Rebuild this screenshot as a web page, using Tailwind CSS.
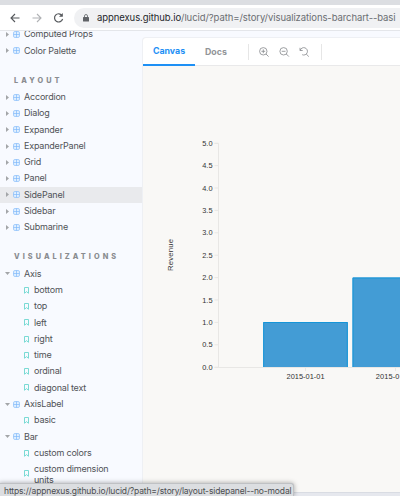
<!DOCTYPE html>
<html lang="en">
<head>
<meta charset="utf-8">
<title>Lucid stories</title>
<script src="https://cdn.jsdelivr.net/npm/@tailwindcss/browser@4"></script>
</head>
<body class="relative flex h-[496px] w-[400px] flex-col overflow-hidden bg-[#f8faff] font-['Inter',sans-serif] text-[#505357]">
<svg class="hidden">
  <symbol id="grid" viewBox="0 0 12 12"><rect x="1" y="1" width="10" height="10" rx="2" fill="#e3f1ff" stroke="#7fb9fb" stroke-width="1.2"/><path d="M6 1v10M1 6h10" stroke="#7fb9fb" stroke-width="1.2"/></symbol>
  <symbol id="mark" viewBox="0 0 10 14"><path d="M1 1h8v11.5L5 9.3 1 12.5z" fill="none" stroke="#6bd6cf" stroke-width="1.8"/></symbol>
</svg>
<div class="h-[5px] shrink-0 bg-[#dcdee2]"></div>
<header class="flex h-[26px] shrink-0 items-center border-b border-[#e4e6ea] bg-white pl-[10px]">
  <svg class="h-3 w-[10px] shrink-0" viewBox="0 0 10 12" fill="none" stroke="#55585c" stroke-width="1.1"><path d="M9.5 6H1M5 2 1 6l4 4"/></svg>
  <svg class="ml-3 h-3 w-[10px] shrink-0" viewBox="0 0 10 12" fill="none" stroke="#b0b2b5" stroke-width="1.1"><path d="M.5 6H9M5 2l4 4-4 4"/></svg>
  <svg class="ml-[11px] h-3 w-[11px] shrink-0" viewBox="0 0 11 12" fill="none" stroke="#55585c" stroke-width="1.2"><path d="M9 3.5A4.1 4.1 0 1 0 9.6 7"/><path d="M9.8 1v3.8H6z" fill="#55585c" stroke="none"/></svg>
  <div class="ml-[10px] flex h-[20px] min-w-0 flex-1 items-center rounded-l-full bg-[#f0f1f3] pl-[9px]">
    <svg class="h-2 w-[6px] shrink-0" viewBox="0 0 6 8"><rect y="3" width="6" height="4.6" rx=".6" fill="#606367"/><path d="M1.5 3V2a1.5 1.5 0 0 1 3 0v1" fill="none" stroke="#606367" stroke-width=".8"/></svg>
    <span class="ml-2 whitespace-nowrap text-[9.5px] leading-3 tracking-[-0.08px] text-[#6b6e72]"><span class="text-[#25282b]">appnexus.github.io</span>/lucid/?path=/story/visualizations-barchart--basi</span>
  </div>
</header>
<div class="flex min-h-0 flex-1">
  <nav class="h-[461px] w-[142px] shrink-0 overflow-hidden text-[9px] leading-[16.3px] tracking-[-0.2px]">
    <div id="tree" class="-mt-[4.6px]"></div>
  </nav>
  <main class="mt-[6px] flex h-[455px] min-w-0 flex-1 flex-col rounded-tl border-l border-t border-[#eef0f4] bg-[#f9f8f6]">
    <div class="flex h-[28px] shrink-0 items-center rounded-tl border-b border-[#e9e9ea] bg-white text-[8.8px] font-bold">
      <div class="flex h-[28px] w-[52px] items-center justify-center border-b-2 border-[#1e90f5] text-[#1e90f5]">Canvas</div>
      <div class="ml-[10px] w-[43px] text-[#929497]">Docs</div>
      <div class="h-[16px] w-px bg-[#e6e6e6]"></div>
      <svg class="ml-[10px] h-[10px] w-[50px]" viewBox="0 0 50 10" fill="none" stroke="#85888b" stroke-width=".8"><circle cx="4.3" cy="4.3" r="3.7"/><path d="M7 7l2.6 2.6M2.4 4.3h3.8M4.3 2.4v3.8"/><circle cx="24.6" cy="4.3" r="3.7"/><path d="M27.3 7l2.6 2.6M22.7 4.3h3.8M41 .8v2.7h2.7M41.2 3.3A3.7 3.7 0 1 1 43.2 7.7M47.2 7l2.6 2.6"/></svg>
      <div class="ml-[12px] h-[16px] w-px bg-[#e6e6e6]"></div>
    </div>
    <svg id="chart" class="h-[330px] w-[257px] shrink-0" viewBox="143 66 257 330" font-family="'Liberation Sans', Arial, sans-serif" font-size="7.4" fill="#333">
      <path d="M214.5 143.5h4v224h-4M218 367.5h182M305.5 367v4M395.5 367v4" fill="none" stroke="#e8e7e5"/>
      <path d="M263.2 367v-45h84.6v45zM352.5 367v-89.5H410V367z" fill="#439cd5"/>
      <path d="M263.7 367v-44.5h83.6V367M353 367v-89h60" fill="none" stroke="#1595d8"/>
      <text x="305.5" y="378.5" text-anchor="middle" textLength="38">2015-01-01</text>
      <text x="375.8" y="378.5" textLength="23.5">2015-0</text>
      <text x="172.5" y="255" text-anchor="middle" textLength="32" font-size="7.8" transform="rotate(-90 172.5 255)">Revenue</text>
    </svg>
  </main>
</div>
<div class="h-1 shrink-0 border-t border-[#d9dce3] bg-[#e6e8ee]"></div>
<div class="absolute -left-px bottom-0 flex h-[13px] w-[295px] items-center rounded-tr-[3px] border border-b-0 border-[#bfc1c4] bg-[#dcdee1] pl-[4px] pt-[2px] shadow-[0_0_5px_rgba(0,0,0,0.35)]">
  <span class="whitespace-nowrap text-[8.5px] leading-[10px] tracking-[-0.14px] text-[#4b4d50]">https://appnexus.github.io/lucid/?path=/story/layout-sidepanel--no-modal</span>
</div>
<script>
const tree = document.getElementById('tree');
const items = ['>Computed Props','>Color Palette','#LAYOUT','>Accordion','>Dialog','>Expander','>ExpanderPanel','>Grid','>Panel','>SidePanel','>Sidebar','>Submarine','#VISUALIZATIONS','vAxis','-bottom','-top','-left','-right','-time','-ordinal','-diagonal text','vAxisLabel','-basic','vBar','-custom colors','-custom dimension units'];
tree.innerHTML = items.map(s => {
  const k = s[0], t = s.slice(1);
  if (k === '#') return `<div class="mt-[13.5px] h-[16.5px] pl-[14px] text-[7.3px] font-extrabold tracking-[3.05px] text-[#8a8c90]">${t}</div>`;
  if (k === '-') return `<div class="flex min-h-[16.3px] items-center pl-[24px]"><svg class="mr-[5px] h-[7px] w-[5px] shrink-0"><use href="#mark"/></svg><span class="${t.length > 20 ? 'w-[85px] pt-[3px] leading-[10.6px]' : ''}">${t}</span></div>`;
  const arrow = k === '>' ? 'M1 0l3 2.5L1 5z' : 'M0 1h5L2.5 4z';
  return `<div class="flex h-[16.3px] items-center pl-[5px] ${t === 'SidePanel' ? 'bg-[#e9eaed]' : ''}"><svg class="mr-[3px] h-[5px] w-[5px]" viewBox="0 0 5 5"><path d="${arrow}" fill="#a3a5a8"/></svg><svg class="mr-[4px] h-[7px] w-[7px]"><use href="#grid"/></svg>${t}</div>`;
}).join('');
const ns = 'http://www.w3.org/2000/svg', chart = document.getElementById('chart');
for (let i = 0; i <= 10; i++) {
  const y = 367.2 - i * 22.4;
  const l = document.createElementNS(ns, 'path');
  l.setAttribute('d', `M214.5 ${y}h4`); l.setAttribute('stroke', '#e8e7e5');
  const t = document.createElementNS(ns, 'text');
  t.setAttribute('x', 212.5); t.setAttribute('y', y + 2.5); t.setAttribute('text-anchor', 'end');
  t.textContent = (i / 2).toFixed(1);
  chart.append(l, t);
}
</script>
</body>
</html>
